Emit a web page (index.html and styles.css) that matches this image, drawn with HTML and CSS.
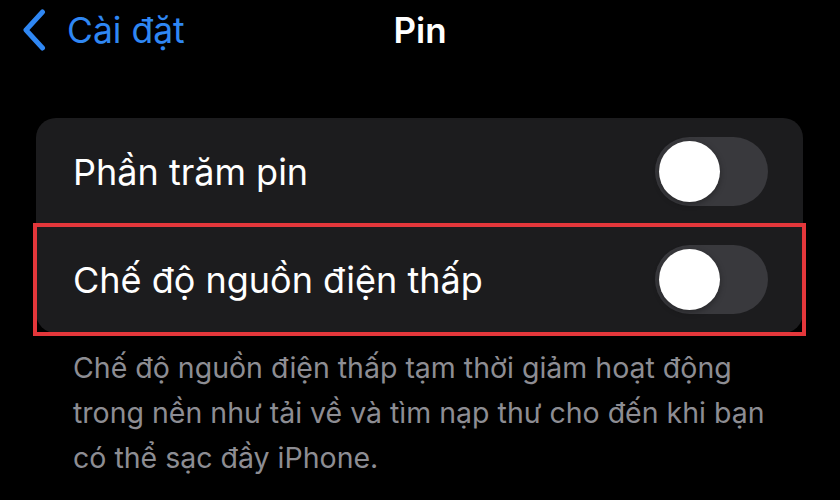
FILE: index.html
```html
<!DOCTYPE html>
<html lang="vi">
  <head>
    <meta charset="UTF-8" />
    <title>Pin</title>
    <link rel="stylesheet" href="styles.css">
  </head>
  <body>
    <header class="nav">
      <a class="back" href="#">
        <svg class="chevron" width="24" height="42" viewBox="0 0 24 42">
          <path d="M20.5 3 L4 21 L20.5 39" fill="none" stroke="#2f87f3" stroke-width="5" stroke-linecap="round" stroke-linejoin="round" />
        </svg>
        <span>Cài đặt</span>
      </a>
      <h1 class="title">Pin</h1>
      <span></span>
    </header>

    <div class="card">
      <div class="row">
        <span class="label">Phần trăm pin</span>
        <span class="switch"><span class="knob"></span></span>
      </div>
      <div class="sep"></div>
      <div class="row highlight">
        <span class="label">Chế độ nguồn điện thấp</span>
        <span class="switch"><span class="knob"></span></span>
      </div>
    </div>

    <p class="note">
      Chế độ nguồn điện thấp tạm thời giảm hoạt động<br />
      trong nền như tải về và tìm nạp thư cho đến khi bạn<br />
      có thể sạc đầy iPhone.
    </p>
  </body>
</html>
```

FILE: styles.css
```css
body {
  margin: 0;
  background: #000;
  color: #fff;
  font-family: Inter, "Noto Sans", sans-serif;
  padding: 0 37px 0 36px;
}
.nav {
  display: grid;
  grid-template-columns: 1fr auto 1fr;
  align-items: center;
  height: 60px;
  margin: 0 -37px 0 -36px;
  padding: 0 22px;
}
.back {
  display: flex;
  align-items: center;
  gap: 21px;
  color: #2f87f3;
  text-decoration: none;
  font-size: 35.5px;
}
.chevron {
  display: block;
}
.title {
  margin: 0;
  font-size: 35px;
  font-weight: 600;
}
.card {
  margin-top: 58px;
  background: #1c1c1e;
  border-radius: 20px;
}
.row {
  display: flex;
  align-items: center;
  justify-content: space-between;
  height: 107px;
  padding: 0 35px 0 37px;
}
.label {
  font-size: 36px;
}
.sep {
  height: 1px;
  margin-left: 37px;
  background: #38383a;
}
.highlight {
  outline: 4px solid #e4373b;
  outline-offset: -1px;
}
.switch {
  display: flex;
  align-items: center;
  width: 113px;
  height: 69px;
  padding: 0 4px;
  box-sizing: border-box;
  border-radius: 35px;
  background: #39393d;
}
.knob {
  width: 61px;
  height: 61px;
  border-radius: 50%;
  background: #fff;
  box-shadow: 0 2px 6px rgba(0, 0, 0, 0.35);
}
.note {
  margin: 12px 0 0 37px;
  font-size: 28.5px;
  line-height: 45px;
  color: #8d8d93;
}
```
